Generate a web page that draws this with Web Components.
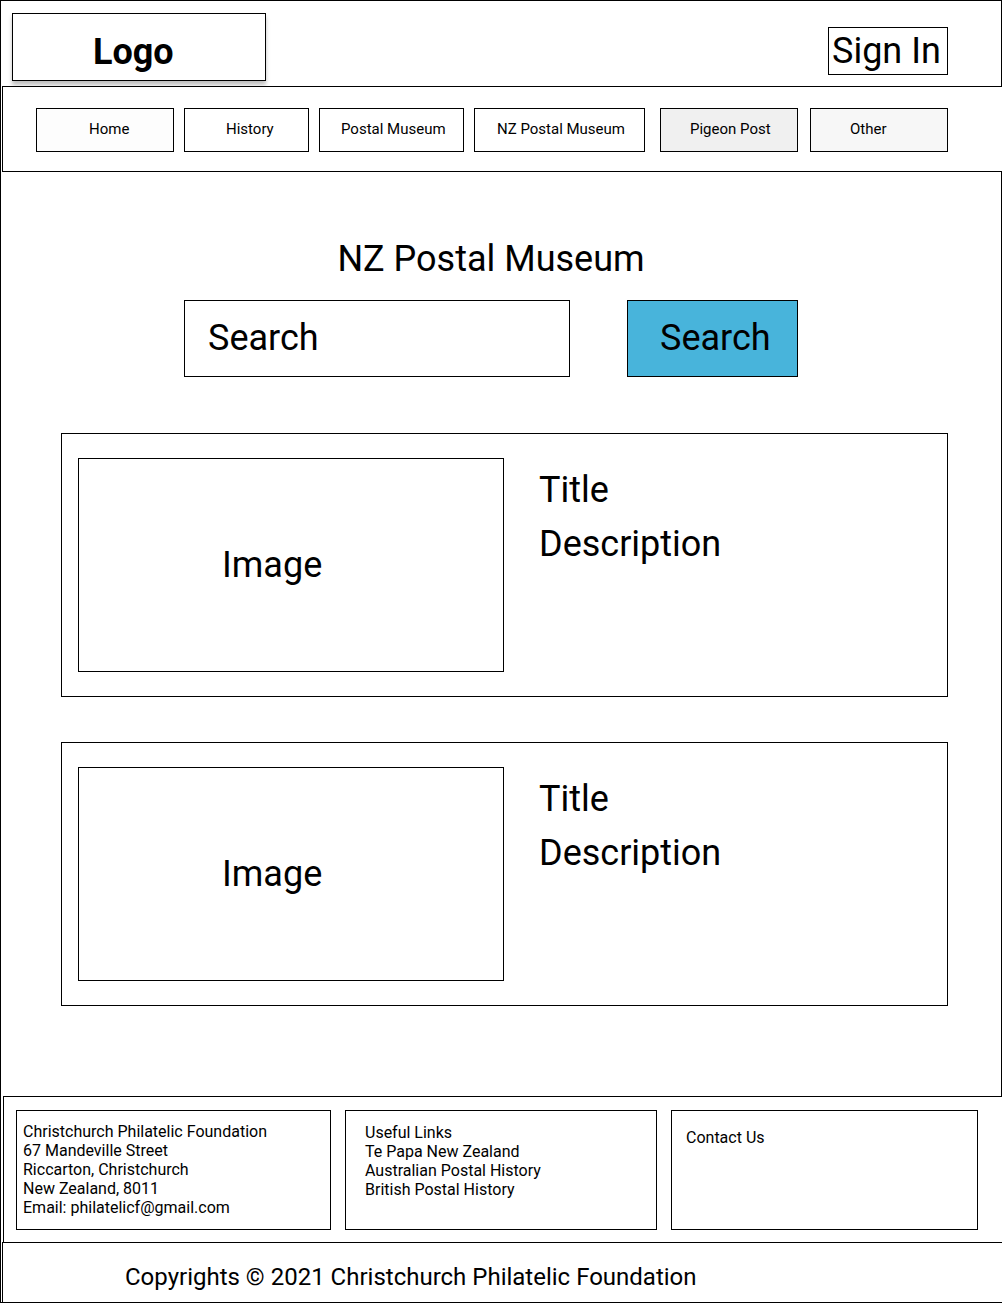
<!DOCTYPE html>
<html lang="en">
<head>
<meta charset="utf-8">
<meta name="viewport" content="width=device-width, initial-scale=1">
<title>NZ Postal Museum</title>
<style>
  body { margin: 0; background: #fff; color: #000; font-family: Roboto, "Liberation Sans", sans-serif; }
</style>
</head>
<body>
<museum-page>
  <site-header slot="header"></site-header>
  <site-nav slot="nav">
    <nav-item href="#home" style="--grow:138;--indent:52px;--fill:#fdfdfd">Home</nav-item>
    <nav-item href="#history" style="--grow:125;--indent:41px">History</nav-item>
    <nav-item href="#postal" style="--grow:145;--indent:21px">Postal Museum</nav-item>
    <nav-item href="#nz-postal" style="--grow:171;--indent:22px">NZ Postal Museum</nav-item>
    <nav-item slot="more" href="#pigeon" style="--grow:138;--indent:29px;--fill:#f0f0f0">Pigeon Post</nav-item>
    <nav-item slot="more" href="#other" style="--grow:138;--indent:39px;--fill:#f7f7f7">Other</nav-item>
  </site-nav>
  <search-panel heading="NZ Postal Museum"></search-panel>
  <result-card><span slot="image">Image</span><span slot="title">Title</span><span slot="description">Description</span></result-card>
  <result-card><span slot="image">Image</span><span slot="title">Title</span><span slot="description">Description</span></result-card>
  <site-footer slot="footer"></site-footer>
</museum-page>

<script>
const define = (name, html, setup) => {
  const template = document.createElement('template');
  template.innerHTML = '<style>*{box-sizing:border-box}a{color:inherit;text-decoration:none}</style>' + html;
  customElements.define(name, class extends HTMLElement {
    constructor() {
      super();
      this.attachShadow({ mode: 'open' }).append(template.content.cloneNode(true));
    }
    connectedCallback() { if (setup) setup(this, this.shadowRoot); }
  });
};

define('museum-page', `
<style>
  :host { display: flex; flex-direction: column; box-sizing: border-box; min-height: 100vh; border: solid #000; border-width: 1px 0 1px 1px; }
  main { flex: 1; display: flex; flex-direction: column; gap: 45px; padding: 66px 53px 90px 60px; border-right: 1px solid #000; }
</style>
<slot name="header"></slot>
<slot name="nav"></slot>
<main><slot></slot></main>
<slot name="footer"></slot>`);

define('site-header', `
<style>
  :host { display: block; border-right: 1px solid #000; }
  header { display: flex; justify-content: space-between; align-items: flex-start; padding: 12px 53px 5px 11px; }
  .logo { width: 254px; height: 68px; padding: 17px 0 0 80px; border: 1px solid #000; box-shadow: 0 4px 4px rgba(0,0,0,.25); font-size: 36px; line-height: 42px; font-weight: 700; }
  button { width: 120px; height: 48px; margin: 14px 0 0; padding: 0 0 0 3px; border: 1px solid #000; background: #fff; color: inherit; font: 36px/42px Roboto, "Liberation Sans", sans-serif; text-align: left; }
</style>
<header><a class="logo" href="#home">Logo</a><button type="button">Sign In</button></header>`);

define('site-nav', `
<style>
  :host { display: block; position: relative; margin-left: 1px; border: solid #000; border-width: 1px 0 1px 1px; background: #fff; }
  nav { display: flex; gap: 15px; padding: 21px 54px 19px 33px; }
  div { display: flex; flex: 609 1 0; gap: 10px; }
  .more { flex-grow: 288; gap: 12px; }
</style>
<nav><div><slot></slot></div><div class="more"><slot name="more"></slot></div></nav>`);

define('nav-item', `
<style>
  :host { display: block; flex: var(--grow, 138) 1 0; min-width: 0; }
  a { display: block; height: 44px; padding: 11px 0 0 var(--indent); border: 1px solid #000; background: var(--fill, #fff); font-size: 15px; line-height: 18px; white-space: nowrap; }
</style>
<a><slot></slot></a>`, (el, root) => { root.querySelector('a').href = el.getAttribute('href'); });

define('search-panel', `
<style>
  :host { display: block; margin: 0 150px 11px 123px; }
  h1 { margin: 0 0 20px; font-size: 36px; line-height: 42px; font-weight: 400; text-align: center; }
  form { display: grid; grid-template-columns: 386fr 171fr; gap: 57px; }
  input, button { width: 100%; min-width: 0; height: 77px; margin: 0; border: 1px solid #000; border-radius: 0; background: #fff; color: #000; font: 36px/42px Roboto, "Liberation Sans", sans-serif; }
  input { padding: 0 23px 2px; }
  input::placeholder { color: #000; opacity: 1; }
  button { padding: 0 0 2px 32px; background: #48b4db; text-align: left; }
</style>
<h1></h1>
<form role="search"><input type="search" aria-label="Search" placeholder="Search"><button type="button">Search</button></form>`,
(el, root) => { root.querySelector('h1').textContent = el.getAttribute('heading'); });

define('result-card', `
<style>
  :host { display: block; }
  article { display: grid; grid-template-columns: 426fr 392fr; gap: 35px; height: 264px; padding: 24px 16px; border: 1px solid #000; font-size: 36px; line-height: 42px; }
  .image { display: flex; align-items: center; padding-left: 143px; border: 1px solid #000; }
  .text { padding-top: 11px; }
  h2, p { margin: 0 0 12px; font-size: 36px; font-weight: 400; }
</style>
<article>
  <div class="image"><slot name="image"></slot></div>
  <div class="text"><h2><slot name="title"></slot></h2><p><slot name="description"></slot></p></div>
</article>`);

define('site-footer', `
<style>
  :host { display: block; }
  .columns { display: grid; grid-template-columns: 315fr 312fr 307fr; gap: 14px; margin-left: 2px; padding: 13px 24px 12px 12px; border: solid #000; border-width: 1px 0 0 1px; font-size: 16px; line-height: 19px; }
  .columns > * { height: 120px; border: 1px solid #000; font-style: normal; }
  address { padding: 11px 6px; }
  .links { padding: 12px 19px; }
  .contact { padding: 17px 14px; }
  .columns span, .links a { display: block; }
  .copy { margin: 0 0 0 1px; padding: 20px 0 11px 122px; border: solid #000; border-width: 1px 0 0 1px; font-size: 24px; line-height: 28px; }
</style>
<footer>
  <div class="columns">
    <address><span>Christchurch Philatelic Foundation</span><span>67 Mandeville Street</span><span>Riccarton, Christchurch</span><span>New Zealand, 8011</span><span>Email: <a href="mailto:philatelicf@gmail.com">philatelicf@gmail.com</a></span></address>
    <div class="links"><span>Useful Links</span><a href="#te-papa">Te Papa New Zealand</a><a href="#australian">Australian Postal History</a><a href="#british">British Postal History</a></div>
    <div class="contact"><a href="#contact">Contact Us</a></div>
  </div>
  <p class="copy">Copyrights © 2021 Christchurch Philatelic Foundation</p>
</footer>`);
</script>
</body>
</html>
